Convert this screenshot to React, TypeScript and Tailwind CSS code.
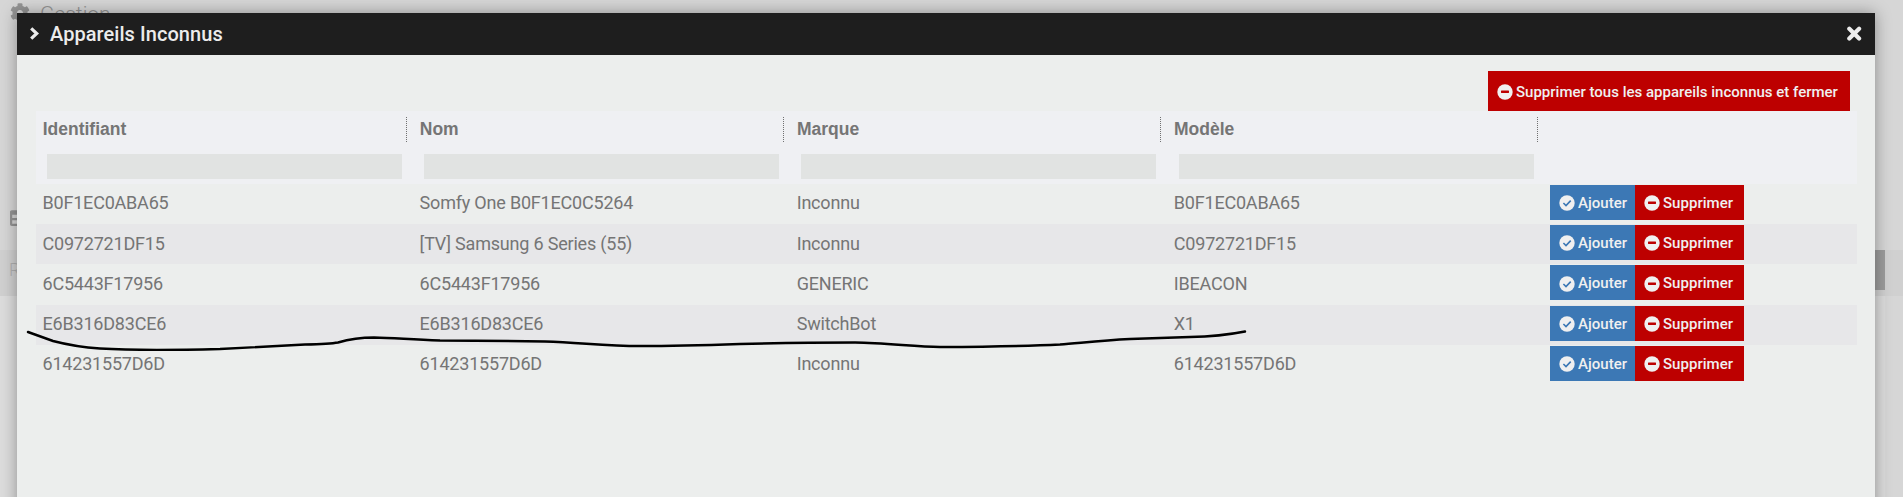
import { FaCog, FaTable } from 'react-icons/fa'

type Device = { id: string; name: string; brand: string; model: string }

const DEVICES: Device[] = [
  { id: 'B0F1EC0ABA65', name: 'Somfy One B0F1EC0C5264', brand: 'Inconnu', model: 'B0F1EC0ABA65' },
  { id: 'C0972721DF15', name: '[TV] Samsung 6 Series (55)', brand: 'Inconnu', model: 'C0972721DF15' },
  { id: '6C5443F17956', name: '6C5443F17956', brand: 'GENERIC', model: 'IBEACON' },
  { id: 'E6B316D83CE6', name: 'E6B316D83CE6', brand: 'SwitchBot', model: 'X1' },
  { id: '614231557D6D', name: '614231557D6D', brand: 'Inconnu', model: '614231557D6D' },
]

const COLUMNS = ['Identifiant', 'Nom', 'Marque', 'Modèle']

// four data columns of equal width, the last one takes the action buttons
const GRID = 'grid grid-cols-[377.1px_377.1px_377.1px_377.1px_1fr]'

function CheckCircle() {
  return (
    <svg className="size-4 shrink-0" viewBox="0 0 16 16" fill="none">
      <circle cx="8" cy="8" r="7.7" fill="#f0f0f0" />
      <path d="M4.400 8 L7 10.600 L11.700 5.600" stroke="#3c78b5" strokeWidth="1.600" />
    </svg>
  )
}

function MinusCircle() {
  return (
    <svg className="size-4 shrink-0" viewBox="0 0 16 16">
      <circle cx="8" cy="8" r="7.7" fill="#f0f0f0" />
      <rect x="4" y="6.600" width="8" height="2.400" rx="0.400" fill="#bd0000" />
    </svg>
  )
}

/** The dimmed page behind the dialog. */
function Backdrop() {
  return (
    <div className="flex h-full flex-col bg-[#d6d6d6] text-[#949494]">
      <div className="flex h-[207px] items-start gap-2.5 pl-[10px] pt-[2px]">
        <FaCog className="mt-px size-5" />
        <span className="text-[21px] font-light leading-[25px]">Gestion</span>
      </div>
      <div className="flex h-[43px] items-start pl-[10px] pt-[2px]">
        <FaTable className="size-[18px]" />
      </div>
      <div className="flex h-[46px] items-start justify-between bg-[#d0d0d0] pl-[9px] text-lg font-light text-[#b0b0b0]">
        <span className="pt-[6px]">R</span>
        <span className="mr-[18px] h-10 w-10 bg-[#9c9c9c]" />
      </div>
      <div className="mr-[18px] flex-1 bg-[#dcdcdc]" />
    </div>
  )
}

function DeviceRow({ device, striped }: { device: Device; striped: boolean }) {
  return (
    <div className={`${GRID} h-[40.2px] ${striped ? 'bg-[#e7e7e9]' : ''}`}>
      {[device.id, device.name, device.brand, device.model].map((value, i) => (
        <span key={i} className="pl-[6.500px] pt-[6.350px] text-[18px] leading-[26px] tracking-[-0.200px]">
          {value}
        </span>
      ))}
      <div className="flex pl-[5.600px] pt-[1px] text-[15px] font-medium tracking-[0.040px] text-[#f0f0f0]">
        <button className="flex h-[35px] w-[85px] items-center gap-[3px] bg-[#3c78b5] pl-[9px] pt-[1.400px]">
          <CheckCircle />
          Ajouter
        </button>
        <button className="flex h-[35px] w-[109px] items-center gap-[3px] bg-[#bd0000] pl-[9px] pt-[1.400px]">
          <MinusCircle />
          Supprimer
        </button>
      </div>
    </div>
  )
}

export default function App() {
  return (
    <div className="relative h-[497px] w-full overflow-hidden font-['Roboto',sans-serif] text-[#757575]">
      <Backdrop />

      <section className="absolute left-[17px] top-[13px] h-[520px] w-[1858px] bg-[#eceeed] shadow-[0_0_15px_rgba(0,0,0,0.35)]">
        <header className="flex h-[42px] items-center bg-[#1e1e1e] pl-[12px] pr-[13.500px] text-[#ececec]">
          <svg className="size-3.5" viewBox="0 0 14 14" fill="none" stroke="currentColor" strokeWidth="3.200">
            <path d="M2.200 1.300 L7.700 6.500 L2.200 11.700" />
          </svg>
          <h1 className="ml-[7px] flex-1 text-[20px] font-medium tracking-[0.060px]">Appareils Inconnus</h1>
          <svg className="size-4" viewBox="0 0 16 16" stroke="currentColor" strokeWidth="4.200" strokeLinecap="round">
            <path d="M3.300 2.800 L13.100 12.600 M13.100 2.800 L3.300 12.600" />
          </svg>
        </header>

        <div className="pl-[19px] pr-[18px] pt-4">
          <div className="flex justify-end pr-[7px]">
            <button className="flex h-10 w-[362px] items-center gap-[3px] bg-[#bd0000] pl-[9px] pt-[1.500px] text-[15px] font-medium text-[#f0f0f0]">
              <MinusCircle />
              Supprimer tous les appareils inconnus et fermer
            </button>
          </div>

          <div className="h-[73px] bg-[#eff0f3]">
            <div className={GRID}>
              {COLUMNS.map((label) => (
                <div key={label} className="h-[43px] pt-[6px]">
                  <div className="mr-[6.100px] h-[25px] border-r border-dotted border-[#707070] pl-[6.700px] font-['Liberation_Sans',sans-serif] text-[17.500px] font-bold leading-[24px]">
                    {label}
                  </div>
                </div>
              ))}
            </div>
            <div className={GRID}>
              {COLUMNS.map((label) => (
                <input key={label} aria-label={label} className="ml-[11.250px] h-[25px] w-[355px] bg-[#e1e3e2]" />
              ))}
            </div>
          </div>

          {DEVICES.map((device, i) => (
            <DeviceRow key={device.id} device={device} striped={i % 2 === 1} />
          ))}
        </div>
      </section>

      {/* hand-drawn underline below the SwitchBot row */}
      <svg className="pointer-events-none absolute inset-0 h-full w-full" viewBox="0 0 1903 497" fill="none" stroke="#000" strokeWidth="2.4" strokeLinecap="round">
        <path d="M28 332 L53 341 Q76 347 100 348.500 Q140 351 220 349 Q265 346.500 305 344.500 Q330 344 338 342.500 C350 339 360 337.500 374 337.500 C395 338 410 339.500 440 340.500 Q490 340.500 545 341.500 C580 342.500 605 346 640 346 Q680 346 740 344 Q800 342.500 855 342.500 C885 343 915 346.500 940 347 Q1020 346.500 1060 344.500 C1080 343 1100 340.500 1130 339 L1190 337 Q1220 336.500 1245 331.500" />
      </svg>
    </div>
  )
}
